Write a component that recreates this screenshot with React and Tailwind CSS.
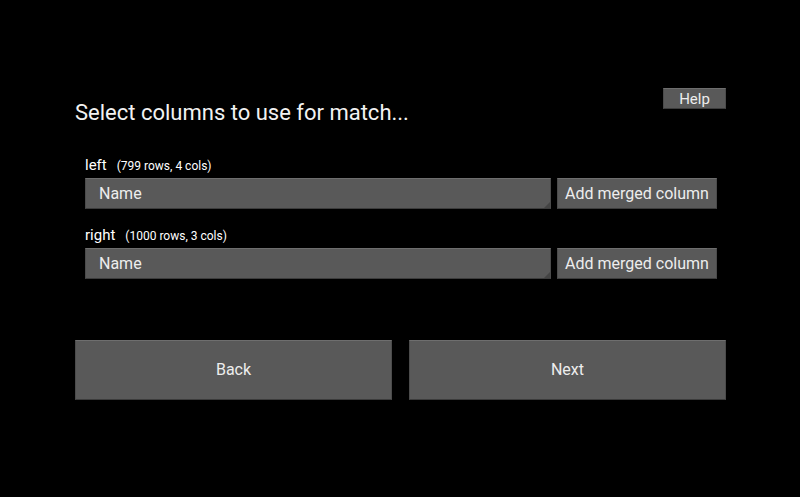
// App.jsx
const btn =
  "bg-[#595959] border-t border-t-[#6e6e6e] border-b border-b-[#3c3c3c] border-x border-x-[#4b4b4b] text-[#ededed]";

function Spinner({ value }) {
  return (
    <div className={`relative flex-1 h-[31px] flex items-center pl-[13px] text-[16px] ${btn}`}>
      {value}
      <svg
        className="absolute right-0 bottom-0"
        width="6"
        height="6"
        viewBox="0 0 6 6"
      >
        <polygon points="6,0 6,6 0,6" fill="#444444" />
      </svg>
    </div>
  );
}

function TableRow({ name, info }) {
  return (
    <div className="flex flex-col">
      <div className="flex items-baseline h-[18px] leading-[18px] mb-[4px]">
        <span className="text-[15px] text-white">{name}</span>
        <span className="text-[12px] text-white ml-[10px]">{info}</span>
      </div>
      <div className="flex gap-[6px]">
        <Spinner value="Name" />
        <button className={`w-[160px] h-[31px] text-[16px] ${btn}`}>
          Add merged column
        </button>
      </div>
    </div>
  );
}

export default function App() {
  return (
    <div
      className="w-[800px] h-[497px] bg-black overflow-hidden"
      style={{ fontFamily: "Roboto, 'Liberation Sans', sans-serif" }}
    >
      <div className="w-[651px] ml-[75px] pt-[88px]">
        <div className="flex justify-between items-start">
          <h1 className="mt-[13px] text-[22px] leading-[24px] text-[#f2f2f2]">
            Select columns to use for match...
          </h1>
          <button className={`w-[63px] h-[21px] pt-[1px] text-[15px] leading-none ${btn}`}>
            Help
          </button>
        </div>

        <div className="flex flex-col gap-[17px] mt-[31px] pl-[10px] pr-[9px]">
          <TableRow name="left" info="(799 rows, 4 cols)" />
          <TableRow name="right" info="(1000 rows, 3 cols)" />
        </div>

        <div className="flex gap-[17px] mt-[61px]">
          <button className={`flex-1 h-[60px] text-[16px] ${btn}`}>Back</button>
          <button className={`flex-1 h-[60px] text-[16px] ${btn}`}>Next</button>
        </div>
      </div>
    </div>
  );
}
